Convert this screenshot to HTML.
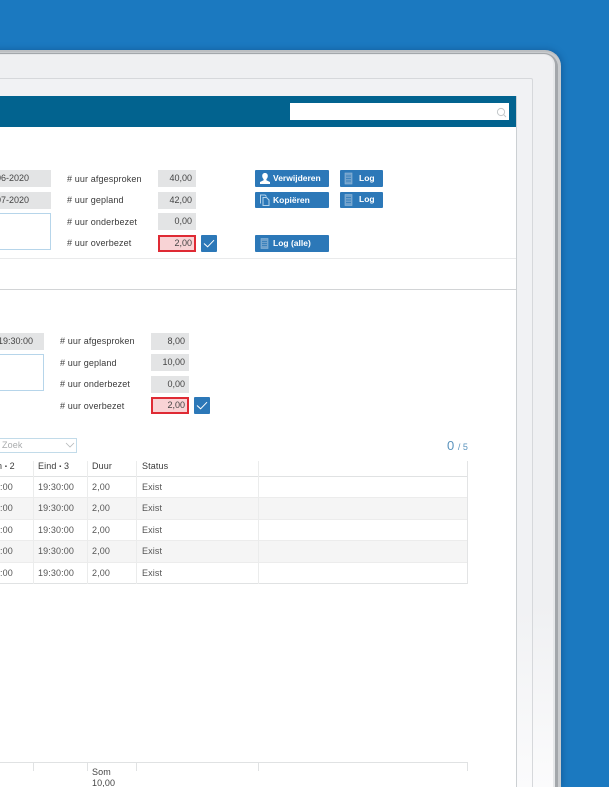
<!DOCTYPE html>
<html><head><meta charset="utf-8">
<style>
html,body{margin:0;padding:0;width:609px;height:787px;overflow:hidden;background:#1b79c0}
*{box-sizing:border-box}
#w{position:relative;width:609px;height:787px;overflow:hidden;font-family:"Liberation Sans",sans-serif;font-size:9px;color:#333;filter:blur(.35px)}
.a{position:absolute}
.t{position:absolute;white-space:nowrap;line-height:12px;letter-spacing:.12px;color:#3a3a3a}
.f{position:absolute;background:#e3e4e5;text-align:right;padding-right:4px;line-height:17px;height:17px;color:#444;white-space:nowrap}
.r{background:#f8d3d5;border:2px solid #df2a34;line-height:13px;padding-right:2px}
.ta{position:absolute;background:#fff;border:1px solid #b6d5ea}
.b{position:absolute;background:#2c78b8;border-radius:1px;color:#fff;font-weight:bold;font-size:8.5px;height:17px;line-height:17px;white-space:nowrap}
.b span{position:absolute;top:0}
.b svg{position:absolute;left:0;top:0}
.c{position:absolute;width:16px;height:17px;background:#2c78b8;border-radius:1px}
.l{position:absolute;background:#e0e2e3}
</style></head><body><div id="w">
<!-- device -->
<div class="a" style="left:-40px;top:50px;width:601px;height:737px;background:#c8cbce;border-radius:0 16px 0 0;border-top:2px solid #bcbfc2;box-shadow:1px 0 7px rgba(10,50,100,.4)"></div>
<div class="a" style="left:-40px;top:53px;width:598px;height:734px;background:#a3a7ab;border-radius:0 14px 0 0"></div>
<div class="a" style="left:-40px;top:54px;width:595px;height:733px;background:#e6e8ea;border-radius:0 11px 0 0"></div>
<div class="a" style="left:-40px;top:55px;width:593px;height:732px;background:linear-gradient(180deg,#eff0f2 0,#eff0f2 75%,#fbfbfc 100%);border-radius:0 9px 0 0"></div>
<div class="a" style="left:-40px;top:78px;width:573px;height:709px;background:linear-gradient(180deg,#f1f2f4 0,#f1f2f4 75%,#fbfbfc 100%);border:1px solid #d6d8db;border-bottom:0;border-radius:2px 2px 0 0"></div>
<div class="a" style="left:-40px;top:96px;width:557px;height:691px;background:#fff;border-right:1px solid #ccd0d3"></div>
<!-- header -->
<div class="a" style="left:0;top:96px;width:516px;height:31px;background:#02638f"></div>
<div class="a" style="left:290px;top:103px;width:219px;height:17px;background:#fff"></div>
<svg class="a" style="left:495px;top:106px" width="13" height="13" viewBox="0 0 13 13"><circle cx="6" cy="6" r="3.600" fill="none" stroke="#c4c8ca" stroke-width="1"/><path d="M8.700 8.700L11 11" stroke="#c4c8ca" stroke-width="1"/></svg>

<!-- section 1 left -->
<div class="f" style="left:-20px;top:170px;width:71px;padding-right:22px">06-2020</div>
<div class="f" style="left:-20px;top:192px;width:71px;padding-right:22px">07-2020</div>
<div class="ta" style="left:-20px;top:213px;width:71px;height:37px"></div>

<div class="t" style="left:67px;top:173px">#&nbsp;uur afgesproken</div>
<div class="t" style="left:67px;top:194px">#&nbsp;uur gepland</div>
<div class="t" style="left:67px;top:216px">#&nbsp;uur onderbezet</div>
<div class="t" style="left:67px;top:237px">#&nbsp;uur overbezet</div>

<div class="f" style="left:158px;top:170px;width:38px">40,00</div>
<div class="f" style="left:158px;top:192px;width:38px">42,00</div>
<div class="f" style="left:158px;top:213px;width:38px">0,00</div>
<div class="f r" style="left:158px;top:235px;width:38px;height:17px">2,00</div>
<div class="c" style="left:201px;top:235px"><svg width="16" height="17" viewBox="0 0 16 17"><path d="M3 8.500L6.600 11.800L13 5.200" fill="none" stroke="#fff" stroke-width="1"/></svg></div>

<div class="b" style="left:255px;top:170px;width:74px"><svg width="18" height="17" viewBox="0 0 18 17"><path d="M10 3c1.900 0 2.800 1.300 2.800 3 0 1.300-.6 2.400-1.400 3.100v1.200l3.600 1.700V14H5v-2l3.600-1.700V9.100C7.800 8.400 7.200 7.300 7.200 6 7.200 4.300 8.100 3 10 3z" fill="#fff"/></svg><span style="left:18px">Verwijderen</span></div>
<div class="b" style="left:255px;top:192px;width:74px;height:16px"><svg width="18" height="16" viewBox="0 0 18 16"><path d="M5.500 11.500V3H10L11.500 4.500M8 13.500V5.500H11.500L14 8V13.500Z" fill="none" stroke="#b5d3ea" stroke-width="1"/></svg><span style="left:18px;line-height:16px">Kopiëren</span></div>
<div class="b" style="left:255px;top:235px;width:74px;height:17px"><svg width="18" height="17" viewBox="0 0 18 17"><rect x="6" y="3.500" width="7" height="10" fill="#6ea0cb" stroke="#8fb8d9" stroke-width=".6"/><path d="M7 6.500h5M7 8.500h5M7 10.500h5" stroke="#2c78b8" stroke-width=".7"/></svg><span style="left:18px">Log (alle)</span></div>
<div class="b" style="left:340px;top:170px;width:43px"><svg width="18" height="17" viewBox="0 0 18 17"><rect x="5" y="3" width="7" height="11" fill="#6ea0cb" stroke="#8fb8d9" stroke-width=".6"/><path d="M6 6h5M6 8.500h5M6 11h5" stroke="#2c78b8" stroke-width=".7"/></svg><span style="left:19px">Log</span></div>
<div class="b" style="left:340px;top:192px;width:43px;height:16px"><svg width="18" height="16" viewBox="0 0 18 16"><rect x="5" y="2.500" width="7" height="11" fill="#6ea0cb" stroke="#8fb8d9" stroke-width=".6"/><path d="M6 5.500h5M6 8h5M6 10.500h5" stroke="#2c78b8" stroke-width=".7"/></svg><span style="left:19px;line-height:15px">Log</span></div>

<div class="l" style="left:0;top:258px;width:516px;height:1px;background:#e9eaeb"></div>
<div class="l" style="left:0;top:289px;width:516px;height:1px;background:#d2d4d6"></div>

<!-- section 2 -->
<div class="f" style="left:-20px;top:333px;width:64px;padding-right:11px">19:30:00</div>
<div class="ta" style="left:-20px;top:354px;width:64px;height:37px"></div>
<div class="t" style="left:60px;top:335px">#&nbsp;uur afgesproken</div>
<div class="t" style="left:60px;top:357px">#&nbsp;uur gepland</div>
<div class="t" style="left:60px;top:378px">#&nbsp;uur onderbezet</div>
<div class="t" style="left:60px;top:400px">#&nbsp;uur overbezet</div>
<div class="f" style="left:151px;top:333px;width:38px">8,00</div>
<div class="f" style="left:151px;top:354px;width:38px">10,00</div>
<div class="f" style="left:151px;top:376px;width:38px">0,00</div>
<div class="f r" style="left:151px;top:397px;width:38px;height:17px">2,00</div>
<div class="c" style="left:194px;top:397px"><svg width="16" height="17" viewBox="0 0 16 17"><path d="M3 8.500L6.600 11.800L13 5.200" fill="none" stroke="#fff" stroke-width="1"/></svg></div>

<!-- select -->
<div class="a" style="left:-10px;top:438px;width:87px;height:15px;border:1px solid #c2dbe9;background:#fff"></div>
<div class="t" style="left:2px;top:439px;color:#a9abad">Zoek</div>
<svg class="a" style="left:65px;top:441px" width="10" height="8" viewBox="0 0 10 8"><path d="M1 2L5 6L9 2" fill="none" stroke="#b5b8ba" stroke-width=".8"/></svg>

<div class="a" style="left:447px;top:438px;color:#5a93bd;font-size:13px;line-height:15px;white-space:nowrap">0 <span style="font-size:9px">/ 5</span></div>

<!-- table -->
<div class="a" style="left:0;top:498px;width:468px;height:21px;background:#f5f5f5"></div>
<div class="a" style="left:0;top:541px;width:468px;height:21px;background:#f5f5f5"></div>
<div class="l" style="left:0;top:476px;width:468px;height:1px"></div>
<div class="l" style="left:0;top:497px;width:468px;height:1px;background:#ececec"></div>
<div class="l" style="left:0;top:519px;width:468px;height:1px;background:#ececec"></div>
<div class="l" style="left:0;top:540px;width:468px;height:1px;background:#ececec"></div>
<div class="l" style="left:0;top:562px;width:468px;height:1px;background:#ececec"></div>
<div class="l" style="left:0;top:583px;width:468px;height:1px"></div>
<div class="l" style="left:33px;top:461px;width:1px;height:123px;background:#ebecec"></div>
<div class="l" style="left:87px;top:461px;width:1px;height:123px;background:#ebecec"></div>
<div class="l" style="left:136px;top:461px;width:1px;height:123px;background:#ebecec"></div>
<div class="l" style="left:258px;top:461px;width:1px;height:123px;background:#ebecec"></div>
<div class="l" style="left:467px;top:461px;width:1px;height:123px;background:#e3e4e5"></div>

<div class="t" style="left:-3px;top:460px">n <span style="font-size:6px;vertical-align:1px">▪</span> 2</div>
<div class="t" style="left:38px;top:460px">Eind <span style="font-size:6px;vertical-align:1px">▪</span> 3</div>
<div class="t" style="left:92px;top:460px">Duur</div>
<div class="t" style="left:142px;top:460px">Status</div>

<div class="t" style="left:0;top:481px;color:#555">:00</div><div class="t" style="left:38px;top:481px;color:#555">19:30:00</div><div class="t" style="left:92px;top:481px;color:#555">2,00</div><div class="t" style="left:142px;top:481px;color:#555">Exist</div>
<div class="t" style="left:0;top:502px;color:#555">:00</div><div class="t" style="left:38px;top:502px;color:#555">19:30:00</div><div class="t" style="left:92px;top:502px;color:#555">2,00</div><div class="t" style="left:142px;top:502px;color:#555">Exist</div>
<div class="t" style="left:0;top:524px;color:#555">:00</div><div class="t" style="left:38px;top:524px;color:#555">19:30:00</div><div class="t" style="left:92px;top:524px;color:#555">2,00</div><div class="t" style="left:142px;top:524px;color:#555">Exist</div>
<div class="t" style="left:0;top:545px;color:#555">:00</div><div class="t" style="left:38px;top:545px;color:#555">19:30:00</div><div class="t" style="left:92px;top:545px;color:#555">2,00</div><div class="t" style="left:142px;top:545px;color:#555">Exist</div>
<div class="t" style="left:0;top:567px;color:#555">:00</div><div class="t" style="left:38px;top:567px;color:#555">19:30:00</div><div class="t" style="left:92px;top:567px;color:#555">2,00</div><div class="t" style="left:142px;top:567px;color:#555">Exist</div>

<!-- footer -->
<div class="l" style="left:0;top:762px;width:468px;height:1px"></div>
<div class="l" style="left:33px;top:762px;width:1px;height:9px"></div>
<div class="l" style="left:87px;top:762px;width:1px;height:9px"></div>
<div class="l" style="left:136px;top:762px;width:1px;height:9px"></div>
<div class="l" style="left:258px;top:762px;width:1px;height:9px"></div>
<div class="l" style="left:467px;top:762px;width:1px;height:9px"></div>
<div class="t" style="left:92px;top:767px;height:20px;overflow:hidden;line-height:11px;color:#444">Som<br>10,00</div>
</div></body></html>
